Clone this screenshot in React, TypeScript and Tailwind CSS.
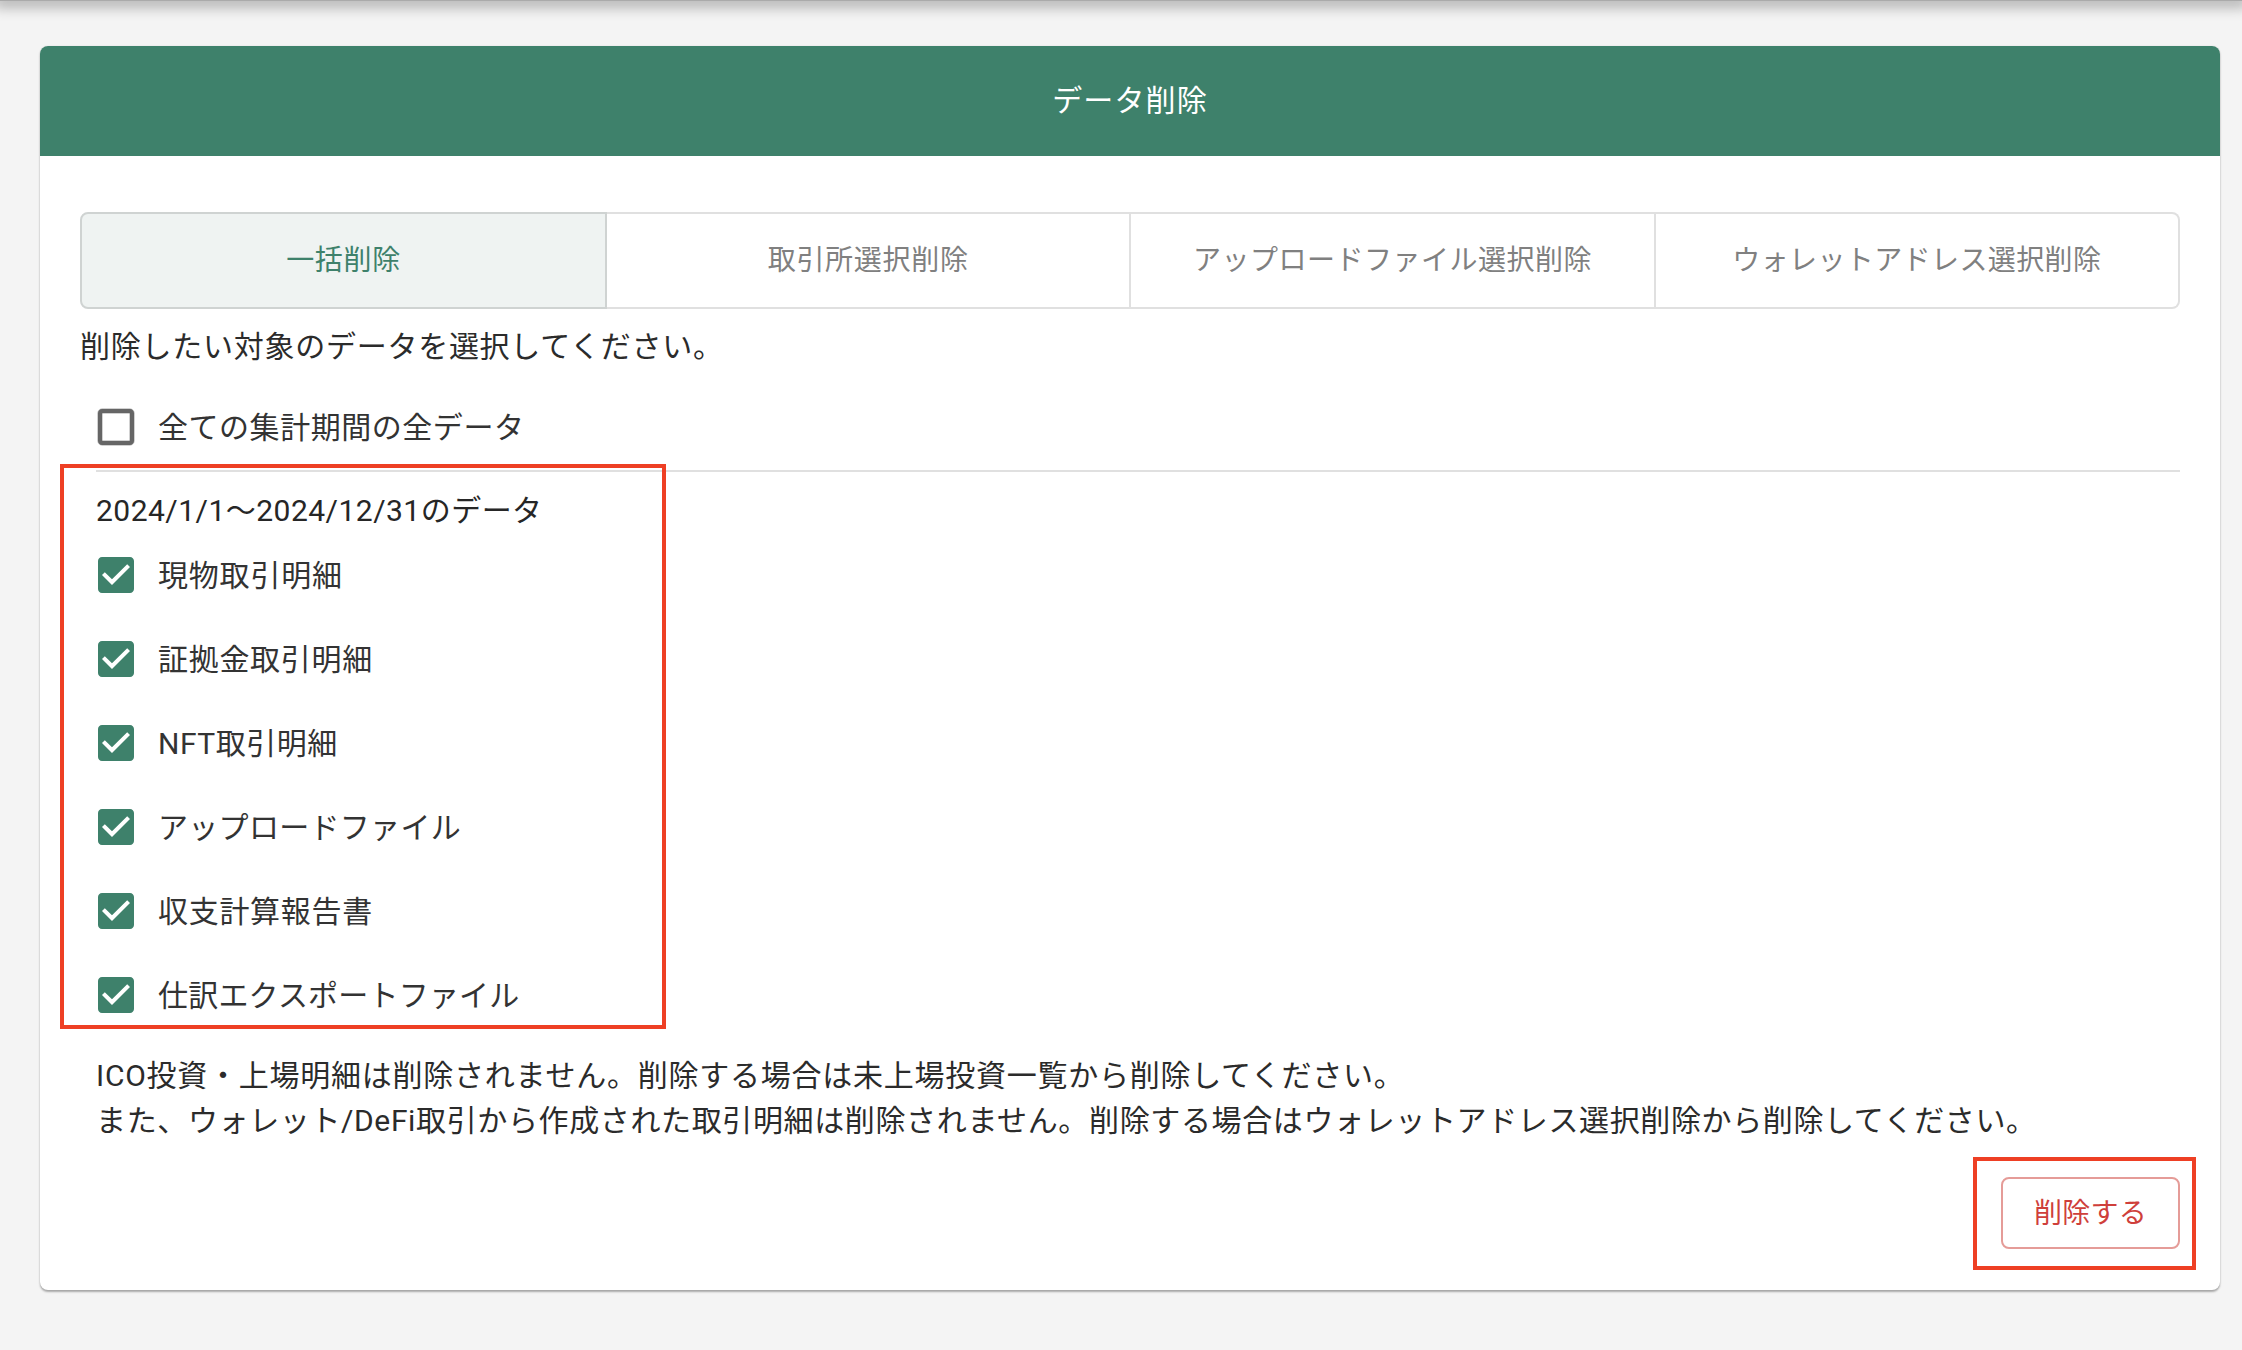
const FONT = "font-['Roboto','Noto_Sans_CJK_JP',sans-serif]";

const tabs = [
  { label: '一括削除', className: 'w-[527px] rounded-l-lg border-2 border-[#cfd3d2] bg-[#eff3f2] tracking-[0.65px] text-[#3e816b]' },
  { label: '取引所選択削除', className: 'flex-1 border-y-2 border-r-2 border-[#e0e0e0] tracking-[0.7px] text-[#808080]' },
  { label: 'アップロードファイル選択削除', className: 'flex-1 border-y-2 border-r-2 border-[#e0e0e0] tracking-[0.5px] text-[#808080]' },
  { label: 'ウォレットアドレス選択削除', className: 'flex-1 rounded-r-lg border-y-2 border-r-2 border-[#e0e0e0] tracking-[0.4px] text-[#808080]' },
];

const items = [
  { label: '現物取引明細', className: 'tracking-[0.8px]' },
  { label: '証拠金取引明細', className: 'tracking-[0.7px]' },
  { label: 'NFT取引明細', className: 'tracking-[0.5px]' },
  { label: 'アップロードファイル', className: 'tracking-[0.3px]' },
  { label: '収支計算報告書', className: 'tracking-[0.7px]' },
  { label: '仕訳エクスポートファイル', className: 'tracking-[0.2px]' },
];

const CheckIcon = ({ checked }: { checked: boolean }) => (
  <svg viewBox="0 0 24 24" className={checked ? 'h-12 w-12 fill-[#3e816b]' : 'h-12 w-12 fill-[#666666] stroke-[#666666] stroke-[0.3]'}>
    {checked ? (
      <path d="M19 3H5c-1.11 0-2 .9-2 2v14c0 1.1.89 2 2 2h14c1.11 0 2-.9 2-2V5c0-1.1-.89-2-2-2zm-9 14l-5-5 1.41-1.41L10 14.17l7.59-7.59L19 8l-9 9z" />
    ) : (
      <path d="M19 5v14H5V5h14m0-2H5c-1.1 0-2 .9-2 2v14c0 1.1.9 2 2 2h14c1.1 0 2-.9 2-2V5c0-1.1-.9-2-2-2z" />
    )}
  </svg>
);

const CheckRow = ({ label, checked, className }: { label: string; checked: boolean; className: string }) => (
  <label className="-ml-1 flex h-[84px] items-center">
    <CheckIcon checked={checked} />
    <span className={`ml-[18px] text-[30px] leading-[45px] text-[#333333] ${className}`}>{label}</span>
  </label>
);

export default function App() {
  return (
    <div className={`${FONT} relative min-h-screen bg-[#f4f4f4]`}>
      <div className="h-px bg-[#aaaaaa] shadow-[0_0_14px_6px_rgba(0,0,0,0.3)]" />
      <div className="pt-[45px] pr-[22px] pl-[40px]">
        <div className="overflow-hidden rounded-lg bg-white shadow-[0_2px_2px_rgba(0,0,0,0.3),0_0_2px_rgba(0,0,0,0.1)]">
          <div className="flex h-[110px] items-center justify-center bg-[#3e816b] pb-0.5 text-[30px] tracking-[1.15px] text-white">データ削除</div>
          <div className="px-[40px] pt-[56px] pb-[41px]">
            <div className="flex h-[97px]">
              {tabs.map((tab) => (
                <div key={tab.label} className={`flex items-center justify-center text-[28px] ${tab.className}`}>
                  {tab.label}
                </div>
              ))}
            </div>
            <p className="mt-[15px] text-[30px] leading-[45px] tracking-[0.74px] text-[#2b2b2b]">削除したい対象のデータを選択してください。</p>
            <div className="mt-[16px] pl-[16px]">
              <CheckRow label="全ての集計期間の全データ" checked={false} className="tracking-[0.54px]" />
              <div className="mt-px h-0.5 bg-[#e0e0e0]" />
              <p className="mt-[16px] text-[30px] leading-[45px] tracking-[0.48px] text-[#262626]">2024/1/1～2024/12/31のデータ</p>
              {items.map((item) => (
                <CheckRow key={item.label} label={item.label} checked className={item.className} />
              ))}
              <p className="mt-[16px] text-[30px] leading-[45px] tracking-[0.75px] text-[#2b2b2b]">
                ICO投資・上場明細は削除されません。削除する場合は未上場投資一覧から削除してください。
                <br />
                <span className="tracking-[0.63px]">また、ウォレット/DeFi取引から作成された取引明細は削除されません。削除する場合はウォレットアドレス選択削除から削除してください。</span>
              </p>
            </div>
            <div className="mt-[34px] flex justify-end">
              <button className="h-[72px] w-[179px] rounded-lg border-2 border-[#e59c98] pt-0.5 text-[28px] tracking-[0.3px] text-[#cf3f3b]">削除する</button>
            </div>
          </div>
        </div>
      </div>
      {/* annotation boxes over the screenshot */}
      <div className="absolute top-[464px] left-[60px] h-[565px] w-[606px] border-4 border-[#ee3f24]" />
      <div className="absolute top-[1157px] left-[1973px] h-[113px] w-[223px] border-4 border-[#ee3f24]" />
    </div>
  );
}
